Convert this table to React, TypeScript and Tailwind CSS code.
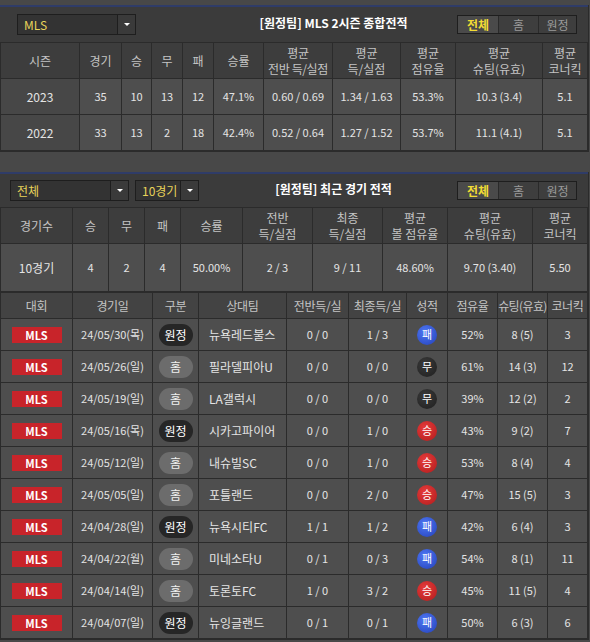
import React from 'react';

const FONT = { fontFamily: '"Noto Sans CJK KR", "Noto Sans", sans-serif' };

type Match = {
  date: string;
  venue: '원정' | '홈';
  opp: string;
  half: string;
  full: string;
  res: '승' | '무' | '패';
  poss: string;
  shots: string;
  corner: string;
};

const matches: Match[] = [
  { date: '24/05/30(목)', venue: '원정', opp: '뉴욕레드불스', half: '0 / 0', full: '1 / 3', res: '패', poss: '52%', shots: '8 (5)', corner: '3' },
  { date: '24/05/26(일)', venue: '홈', opp: '필라델피아U', half: '0 / 0', full: '0 / 0', res: '무', poss: '61%', shots: '14 (3)', corner: '12' },
  { date: '24/05/19(일)', venue: '홈', opp: 'LA갤럭시', half: '0 / 0', full: '0 / 0', res: '무', poss: '39%', shots: '12 (2)', corner: '2' },
  { date: '24/05/16(목)', venue: '원정', opp: '시카고파이어', half: '0 / 0', full: '1 / 0', res: '승', poss: '43%', shots: '9 (2)', corner: '7' },
  { date: '24/05/12(일)', venue: '홈', opp: '내슈빌SC', half: '0 / 0', full: '1 / 0', res: '승', poss: '53%', shots: '8 (4)', corner: '4' },
  { date: '24/05/05(일)', venue: '홈', opp: '포틀랜드', half: '0 / 0', full: '2 / 0', res: '승', poss: '47%', shots: '15 (5)', corner: '3' },
  { date: '24/04/28(일)', venue: '원정', opp: '뉴욕시티FC', half: '1 / 1', full: '1 / 2', res: '패', poss: '42%', shots: '6 (4)', corner: '3' },
  { date: '24/04/22(월)', venue: '홈', opp: '미네소타U', half: '0 / 1', full: '0 / 3', res: '패', poss: '54%', shots: '8 (1)', corner: '11' },
  { date: '24/04/14(일)', venue: '홈', opp: '토론토FC', half: '1 / 0', full: '3 / 2', res: '승', poss: '45%', shots: '11 (5)', corner: '4' },
  { date: '24/04/07(일)', venue: '원정', opp: '뉴잉글랜드', half: '0 / 1', full: '0 / 1', res: '패', poss: '50%', shots: '6 (3)', corner: '6' },
];

function Select({ label, width }: { label: string; width: string }) {
  return (
    <div className={`flex h-[21px] ${width} border border-[#1e1e1e] bg-[#333333]`}>
      <div className="flex-1 pl-[6px] text-[12px] leading-[19px] text-[#e8d35a]">{label}</div>
      <div className="flex w-[18px] items-center justify-center border-l border-[#1e1e1e] bg-[#3a3a3a]">
        <span className="h-0 w-0 border-x-[3px] border-t-[3px] border-x-transparent border-t-white" />
      </div>
    </div>
  );
}

function Tabs() {
  return (
    <div className="flex h-[19px] border border-[#1e1e1e] bg-[#3e3e3e] text-[12px] leading-[17px]">
      <div className="w-[40px] bg-[#4a4a4a] text-center font-bold text-[#f2dc34]">전체</div>
      <div className="w-[40px] border-l border-[#2a2a2a] text-center text-[#9a9a9a]">홈</div>
      <div className="w-[38px] border-l border-[#2a2a2a] text-center text-[#9a9a9a]">원정</div>
    </div>
  );
}

function SectionHead({ left, title }: { left: React.ReactNode; title: string }) {
  return (
    <div className="flex items-center border-t-2 border-[#2f3c68] bg-[#3b3b3b] pl-[10px] pr-[11px]">
      <div className="w-[200px]">{left}</div>
      <div className="flex-1 pb-[3px] text-center text-[12px] leading-[16px] font-bold text-white">{title}</div>
      <Tabs />
    </div>
  );
}

const th = 'border border-[#2b2b2b] bg-[#3d3d3d] text-[12px] font-normal leading-[16px] text-[#c4c4c4] whitespace-nowrap';
const td = 'border border-[#2b2b2b] bg-[#4e4e4e] text-[11px] text-[#e4e4e4] whitespace-nowrap';

function ResultBall({ r }: { r: Match['res'] }) {
  const color =
    r === '패'
      ? 'bg-[radial-gradient(circle_at_40%_35%,#4f78f5,#2340b8)]'
      : r === '승'
        ? 'bg-[radial-gradient(circle_at_40%_35%,#e63b3b,#b01c1c)]'
        : 'bg-[radial-gradient(circle_at_40%_35%,#3a3a3a,#1f1f1f)]';
  return (
    <span className={`inline-flex h-[20px] w-[20px] items-center justify-center rounded-full align-middle text-[11px] leading-none text-white ${color}`}>
      {r}
    </span>
  );
}

export default function App() {
  return (
    <div className="h-[642px] w-[590px] overflow-hidden bg-[#484848] pt-[5px]" style={FONT}>
      <div className="w-[589px] border-r border-b border-[#2b2b2b]">
        <SectionHead
          left={<div className="pt-[7px] pb-[7px] pl-[7px]"><Select label="MLS" width="w-[119px]" /></div>}
          title="[원정팀] MLS 2시즌 종합전적"
        />
        <table className="w-full table-fixed border-collapse text-center">
          <colgroup>
            <col className="w-[79px]" />
            <col className="w-[42px]" />
            <col className="w-[30px]" />
            <col className="w-[31px]" />
            <col className="w-[31px]" />
            <col className="w-[50px]" />
            <col className="w-[69px]" />
            <col className="w-[68px]" />
            <col className="w-[55px]" />
            <col className="w-[87px]" />
            <col />
          </colgroup>
          <thead>
            <tr className="h-[36px]">
              <th className={th}>시즌</th>
              <th className={th}>경기</th>
              <th className={th}>승</th>
              <th className={th}>무</th>
              <th className={th}>패</th>
              <th className={th}>승률</th>
              <th className={`${th} tracking-[-0.4px]`}>평균<br />전반 득/실점</th>
              <th className={th}>평균<br />득/실점</th>
              <th className={th}>평균<br />점유율</th>
              <th className={th}>평균<br />슈팅(유효)</th>
              <th className={th}>평균<br />코너킥</th>
            </tr>
          </thead>
          <tbody>
            {[
              ['2023', '35', '10', '13', '12', '47.1%', '0.60 / 0.69', '1.34 / 1.63', '53.3%', '10.3 (3.4)', '5.1'],
              ['2022', '33', '13', '2', '18', '42.4%', '0.52 / 0.64', '1.27 / 1.52', '53.7%', '11.1 (4.1)', '5.1'],
            ].map((row) => (
              <tr key={row[0]} className="h-[36px]">
                {row.map((c, i) => (
                  <td key={i} className={`${td} ${i === 0 ? 'bg-[#474747] text-[12px]' : ''}`}>{c}</td>
                ))}
              </tr>
            ))}
          </tbody>
        </table>
      </div>

      <div className="h-[20px]" />

      <div className="w-[589px] border-r border-b border-[#2b2b2b]">
        <SectionHead
          left={
            <div className="flex gap-[6px] py-[6px]">
              <Select label="전체" width="w-[119px]" />
              <Select label="10경기" width="w-[64px]" />
            </div>
          }
          title="[원정팀] 최근 경기 전적"
        />
        <table className="w-full table-fixed border-collapse text-center">
          <colgroup>
            <col className="w-[72px]" />
            <col className="w-[36px]" />
            <col className="w-[36px]" />
            <col className="w-[36px]" />
            <col className="w-[62px]" />
            <col className="w-[70px]" />
            <col className="w-[70px]" />
            <col className="w-[65px]" />
            <col className="w-[85px]" />
            <col />
          </colgroup>
          <thead>
            <tr className="h-[36px]">
              <th className={th}>경기수</th>
              <th className={th}>승</th>
              <th className={th}>무</th>
              <th className={th}>패</th>
              <th className={th}>승률</th>
              <th className={th}>전반<br />득/실점</th>
              <th className={th}>최종<br />득/실점</th>
              <th className={th}>평균<br />볼 점유율</th>
              <th className={th}>평균<br />슈팅(유효)</th>
              <th className={th}>평균<br />코너킥</th>
            </tr>
          </thead>
          <tbody>
            <tr className="h-[48px]">
              {['10경기', '4', '2', '4', '50.00%', '2 / 3', '9 / 11', '48.60%', '9.70 (3.40)', '5.50'].map((c, i) => (
                <td key={i} className={`${td} ${i === 0 ? 'text-[12px]' : ''}`}>{c}</td>
              ))}
            </tr>
          </tbody>
        </table>
        <table className="w-full table-fixed border-collapse text-center">
          <colgroup>
            <col className="w-[72px]" />
            <col className="w-[80px]" />
            <col className="w-[46px]" />
            <col className="w-[88px]" />
            <col className="w-[62px]" />
            <col className="w-[58px]" />
            <col className="w-[41px]" />
            <col className="w-[50px]" />
            <col className="w-[50px]" />
            <col />
          </colgroup>
          <thead>
            <tr className="h-[26px]">
              {['대회', '경기일', '구분', '상대팀', '전반득/실', '최종득/실', '성적', '점유율', '슈팅(유효)', '코너킥'].map((h) => (
                <th key={h} className={`${th} bg-[#434343] px-0 ${h === '슈팅(유효)' ? 'text-[11px] tracking-[-0.6px]' : 'tracking-[-0.3px]'}`}>{h}</th>
              ))}
            </tr>
          </thead>
          <tbody>
            {matches.map((m) => (
              <tr key={m.date} className="h-[32px]">
                <td className={td}>
                  <span className="mx-auto block h-[16px] w-[50px] bg-[#c8242a] text-[11px] font-bold leading-[16px] text-white">MLS</span>
                </td>
                <td className={`${td} text-[#dcdcdc]`}>{m.date}</td>
                <td className={td}>
                  <span
                    className={`inline-block h-[22px] w-[34px] rounded-full align-middle text-[12px] leading-[22px] ${
                      m.venue === '원정' ? 'bg-[#262626] text-white' : 'bg-[#6c6c6c] text-[#f0f0f0]'
                    }`}
                  >
                    {m.venue}
                  </span>
                </td>
                <td className={`${td} pl-[10px] text-left text-[12px]`}>{m.opp}</td>
                <td className={td}>{m.half}</td>
                <td className={td}>{m.full}</td>
                <td className={td}><ResultBall r={m.res} /></td>
                <td className={td}>{m.poss}</td>
                <td className={td}>{m.shots}</td>
                <td className={td}>{m.corner}</td>
              </tr>
            ))}
          </tbody>
        </table>
      </div>
    </div>
  );
}
